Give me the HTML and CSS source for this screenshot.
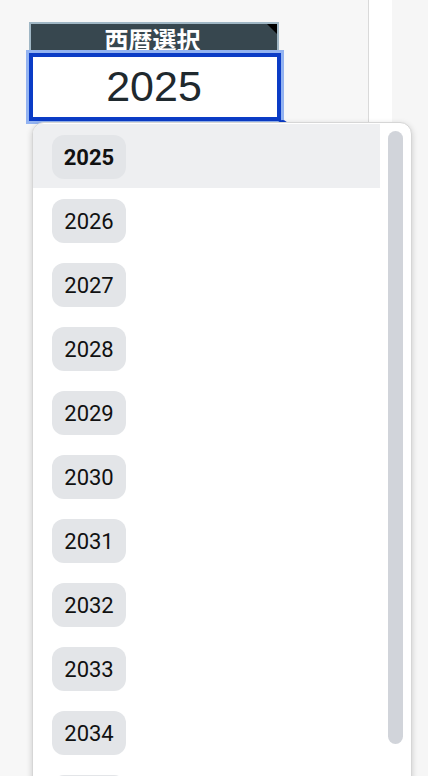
FILE: index.html
```html
<!DOCTYPE html>
<html lang="ja">
<head>
<meta charset="utf-8">
<title>西暦選択</title>
<link rel="stylesheet" href="styles.css">
</head>
<body>
<div class="page">
  <main class="main">
    <div class="picker">
      <div class="picker-head">西暦選択</div>
      <div class="picker-input">2025</div>
    </div>
  </main>
  <div class="gutter"></div>
  <div class="side"></div>
</div>
<div class="menu">
  <ul class="menu-list">
    <li class="menu-item is-active"><span class="chip">2025</span></li>
    <li class="menu-item"><span class="chip">2026</span></li>
    <li class="menu-item"><span class="chip">2027</span></li>
    <li class="menu-item"><span class="chip">2028</span></li>
    <li class="menu-item"><span class="chip">2029</span></li>
    <li class="menu-item"><span class="chip">2030</span></li>
    <li class="menu-item"><span class="chip">2031</span></li>
    <li class="menu-item"><span class="chip">2032</span></li>
    <li class="menu-item"><span class="chip">2033</span></li>
    <li class="menu-item"><span class="chip">2034</span></li>
    <li class="menu-item"><span class="chip">2035</span></li>
  </ul>
  <div class="track"><div class="thumb"></div></div>
</div>
</body>
</html>
```
FILE: styles.css
```css
* { box-sizing: border-box; }
html, body { margin: 0; padding: 0; }
body {
  width: 428px;
  height: 776px;
  overflow: hidden;
  background: #f7f7f7;
  font-family: Roboto, "Liberation Sans", "Noto Sans CJK JP", sans-serif;
  position: relative;
}
.page {
  display: flex;
  height: 776px;
}
.main {
  width: 369px;
  border-right: 1px solid #dadada;
  background: #f7f7f7;
}
.gutter {
  width: 23px;
  background: #ffffff;
}
.side {
  flex: 1;
  background: #f6f6f6;
}
.picker {
  padding: 22px 0 0 26px;
  position: relative;
}
.picker-head {
  position: relative;
  margin-left: 3px;
  width: 250px;
  height: 31px;
  background: #37474f;
  border: 2px solid #a0b7c5;
  border-bottom: none;
  color: #ffffff;
  font-family: "Noto Sans CJK JP", sans-serif;
  font-weight: 700;
  font-size: 24px;
  line-height: 24px;
  text-align: center;
  padding-top: 3px;
  padding-right: 3px;
  overflow: hidden;
}
.picker-head::after {
  content: "";
  position: absolute;
  top: 0;
  right: 0;
  border-top: 10px solid #000000;
  border-left: 10px solid transparent;
}
.picker-input {
  position: relative;
  margin-top: -3px;
  width: 258px;
  height: 74px;
  background: #ffffff;
  border: 3px solid #93b3f1;
  color: #1f292e;
  font-family: "Liberation Sans", Arial, sans-serif;
  font-size: 43px;
  line-height: 66px;
  text-align: center;
  padding-right: 2px;
}
.picker-input::before {
  content: "";
  position: absolute;
  inset: 0;
  border: 4px solid #0b3cc6;
  pointer-events: none;
}
.picker-input::after {
  content: "";
  position: absolute;
  right: -6px;
  bottom: -8px;
  width: 9px;
  height: 9px;
  border-radius: 50%;
  background: #0b3cc6;
}
.menu {
  position: absolute;
  left: 32px;
  top: 122px;
  width: 380px;
  height: 720px;
  background: #ffffff;
  border: 1px solid #d6d6d6;
  border-radius: 12px;
  box-shadow: 0 2px 6px rgba(0, 0, 0, 0.18);
  display: flex;
  overflow: hidden;
  z-index: 2;
}
.menu-list {
  list-style: none;
  margin: 0;
  padding: 1px 0 0;
  width: 347px;
  flex: 0 0 347px;
}
.menu-item {
  height: 64px;
  display: flex;
  align-items: center;
  padding-left: 19px;
  padding-top: 2px;
}
.menu-item.is-active {
  background: #eeeff1;
}
.chip {
  display: inline-flex;
  align-items: center;
  justify-content: center;
  height: 44px;
  width: 74px;
  border-radius: 12px;
  background: #e3e5e8;
  color: #111111;
  font-size: 22px;
  font-weight: 400;
}
.is-active .chip {
  font-weight: 700;
}
.track {
  padding: 8px 0 0 8px;
}
.thumb {
  width: 15px;
  height: 613px;
  border-radius: 8px;
  background: #d1d4da;
}
```
